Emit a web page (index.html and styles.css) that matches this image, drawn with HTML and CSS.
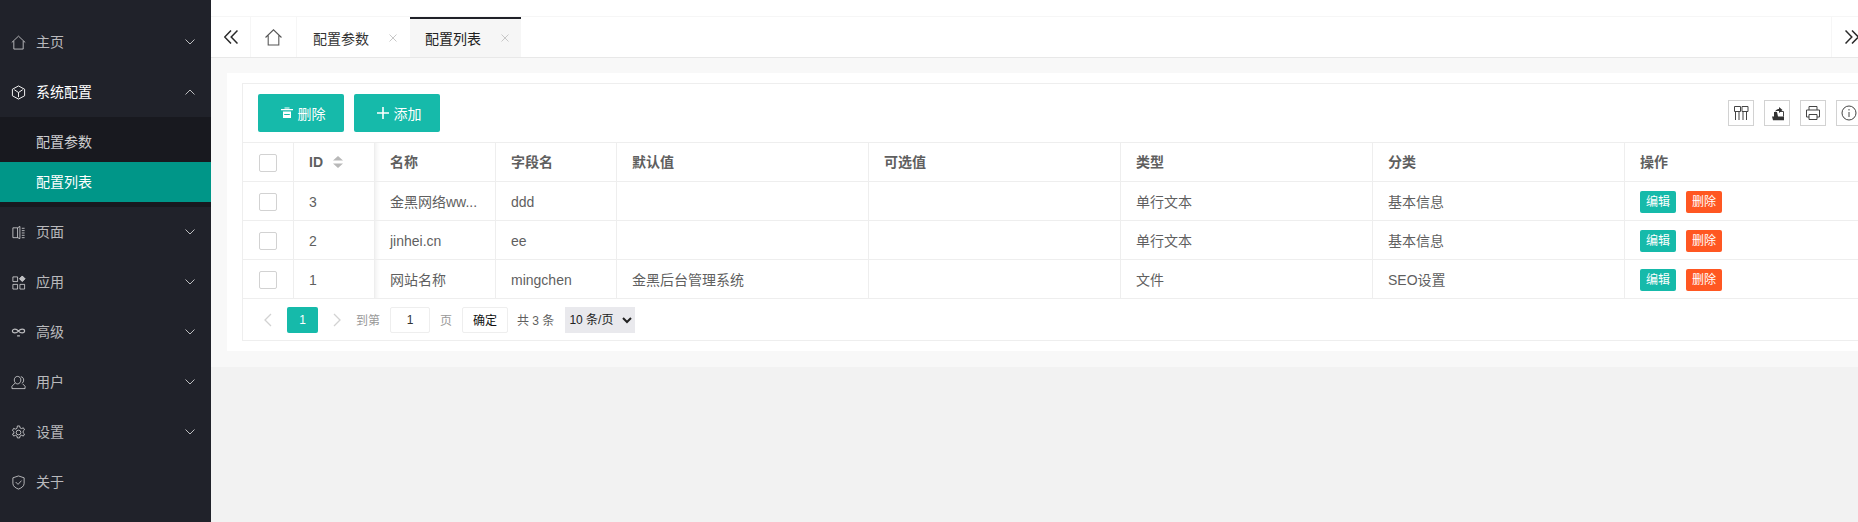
FILE: index.html
```html
<!DOCTYPE html>
<html lang="zh">
<head>
<meta charset="utf-8">
<title>配置列表</title>
<link rel="stylesheet" href="styles.css">
</head>
<body>
<div class="app">
  <aside class="side">
    <a class="nav-item"><svg class="nav-ico" viewBox="0 0 16 16"><path d="M.8 8 8 1.2 15.200 8M3 6.500V15h10V6.500"/></svg><span class="nav-label">主页</span><svg class="chev" viewBox="0 0 10 6"><path d="M.5.5 5 5 9.500.5"/></svg></a>
    <a class="nav-item nav-open"><svg class="nav-ico" viewBox="0 0 16 16"><path d="M8 1 14.500 4.500v7L8 15 1.500 11.500v-7zM3.500 5 8 8l4.500-3M8 8v5"/></svg><span class="nav-label">系统配置</span><svg class="chev" viewBox="0 0 10 6"><path d="M.5 5.500 5 1l4.500 4.500"/></svg></a>
    <div class="sub">
      <a class="sub-item">配置参数</a>
      <a class="sub-item sub-on">配置列表</a>
    </div>
    <a class="nav-item"><svg class="nav-ico" viewBox="0 0 16 16"><path d="M7 3H2v10.500h5zM7 3l2.500-1.500v13L7 13.500M11.500 3.500h3M11.500 6h3M11.500 8.500h3M11.500 11h3M11.500 13.500h3"/></svg><span class="nav-label">页面</span><svg class="chev" viewBox="0 0 10 6"><path d="M.5.500 5 5 9.500.5"/></svg></a>
    <a class="nav-item"><svg class="nav-ico" viewBox="0 0 16 16"><path d="M2 2h5v5H2zM2 10h5v5H2zM9.500 10h5v5h-5z"/><path class="ico-fill" d="m12 1 3 3-3 3-3-3z"/></svg><span class="nav-label">应用</span><svg class="chev" viewBox="0 0 10 6"><path d="M.5.500 5 5 9.500.5"/></svg></a>
    <a class="nav-item"><svg class="nav-ico nav-ico-b" viewBox="0 0 16 16"><path d="M8 6.500C6.500 4.800 5.500 4.500 4.200 4.500S1.500 5.400 1.500 6.500 2.800 8.500 4.200 8.500 6.500 8.200 8 6.500s2.500-2 3.800-2 2.700.9 2.700 2-1.300 2-2.700 2S9.500 8.200 8 6.500zM6.500 11.500h3"/></svg><span class="nav-label">高级</span><svg class="chev" viewBox="0 0 10 6"><path d="M.5.500 5 5 9.500.5"/></svg></a>
    <a class="nav-item"><svg class="nav-ico" viewBox="0 0 16 16"><path d="M7 9.500c-2 0-3.500-2-3.500-4.200S5 1.500 7 1.500s3.500 1.600 3.500 3.800S9 9.500 7 9.500zM4.500 8.500 1 12v2.500h14V12l-2.500-2.500M10.500 1.800c2 .3 3 1.700 3 3.500 0 1.500-.7 3-2 3.700"/></svg><span class="nav-label">用户</span><svg class="chev" viewBox="0 0 10 6"><path d="M.5.500 5 5 9.500.5"/></svg></a>
    <a class="nav-item"><svg class="nav-ico" viewBox="0 0 16 16"><circle cx="8" cy="8" r="2.500"/><path d="M6.800 1h2.400l.4 2 1.600.8 2-.8 1.200 2.200-1.500 1.300v1.800l1.500 1.300-1.200 2.200-2-.8-1.600.8-.4 2H6.800l-.4-2-1.600-.8-2 .8-1.200-2.200L3.100 8.900V7.100L1.600 5.800l1.200-2.200 2 .8 1.600-.8z"/></svg><span class="nav-label">设置</span><svg class="chev" viewBox="0 0 10 6"><path d="M.5.500 5 5 9.500.5"/></svg></a>
    <a class="nav-item"><svg class="nav-ico" viewBox="0 0 16 16"><path d="M8 1 14 3v6c0 3-3 5-6 6-3-1-6-3-6-6V3zM5 7.500 7.500 10 11.200 6"/></svg><span class="nav-label">关于</span></a>
  </aside>

  <main class="main">
    <div class="top-strip"></div>
    <div class="tabs">
      <div class="tab-arrow tab-arrow-l"><svg class="arrows" viewBox="0 0 14 14"><path d="M7 .5.700 7 7 13.500M13.500.5 7.200 7l6.300 6.500"/></svg></div>
      <div class="tab-home"><svg class="home" viewBox="0 0 16 16"><path d="M.5 8 8 .8 15.500 8M3 6V15h10V6"/></svg></div>
      <div class="tab"><span>配置参数</span><svg class="tab-x" viewBox="0 0 8 8"><path d="m.5.500 7 7M7.500.5l-7 7"/></svg></div>
      <div class="tab tab-on"><span>配置列表</span><svg class="tab-x" viewBox="0 0 8 8"><path d="m.5.500 7 7M7.500.5l-7 7"/></svg></div>
      <div class="tab-fill"></div>
      <div class="tab-arrow tab-arrow-r"><svg class="arrows" viewBox="0 0 14 14"><path d="M.5.5 6.800 7 .5 13.500M7 .5 13.300 7 7 13.500"/></svg></div>
    </div>

    <section class="content">
      <div class="card">
        <div class="tbl-box">
          <div class="toolbar">
            <button class="btn"><svg class="btn-ico-s" viewBox="0 0 12 12"><path d="M3.500.500h5v1h-5zM0 2h12v1.300H0z"/><path fill-rule="evenodd" d="M2 4.500h8V11H2zM3.200 7h5.600v1H3.200z"/></svg>删除</button>
            <button class="btn"><svg class="btn-ico" viewBox="0 0 12 12"><path d="M5.200 0h1.600v5.200H12v1.600H6.800V12H5.200V6.800H0V5.200h5.200z"/></svg>添加</button>
            <div class="tools">
              <span class="tool"><svg viewBox="0 0 16 16"><path d="M1.500 1.500h6v5h-6zM9 1.500h6v5H9zM2.500 6.500V15M6 6.500V15M10 6.500V15M13.500 6.500V15"/></svg></span>
              <span class="tool"><svg viewBox="0 0 16 16"><path d="M10 6.500h4.500v5"/><path class="solid" d="M3 11.500h12v3.800H4zM5 7h3l1 4.500H5zM6 6.500C7 4.500 9 4 10 4V2l3.500 3L10 8V6C8.500 6 7 6 6 6.500z"/></svg></span>
              <span class="tool"><svg viewBox="0 0 16 16"><path d="M4 5V1.500h8V5M4 12H1.500V5h13v7H12M4 9.500h8v5H4z"/></svg></span>
              <span class="tool"><svg viewBox="0 0 16 16"><circle cx="8" cy="8" r="7"/><path d="M8 7v5M8 4v1.500"/></svg></span>
            </div>
          </div>
          <table class="grid">
            <colgroup>
              <col class="c-check"><col class="c-id"><col class="c-name"><col class="c-field"><col class="c-wide"><col class="c-wide"><col class="c-wide"><col class="c-wide"><col class="c-act">
            </colgroup>
            <thead>
              <tr>
                <th class="td-check"><span class="check"></span></th>
                <th>ID<svg class="sort" viewBox="0 0 10 12"><path d="M5 0l5 4.500H0zM0 7.500h10L5 12z"/></svg></th>
                <th class="fixed-edge">名称</th><th>字段名</th><th>默认值</th><th>可选值</th><th>类型</th><th>分类</th><th>操作</th>
              </tr>
            </thead>
            <tbody>
              <tr>
                <td class="td-check"><span class="check"></span></td><td>3</td><td class="fixed-edge">金黑网络ww...</td><td>ddd</td><td></td><td></td><td>单行文本</td><td>基本信息</td>
                <td><span class="act-row"><a class="mini">编辑</a><a class="mini mini-del">删除</a></span></td>
              </tr>
              <tr>
                <td class="td-check"><span class="check"></span></td><td>2</td><td class="fixed-edge">jinhei.cn</td><td>ee</td><td></td><td></td><td>单行文本</td><td>基本信息</td>
                <td><span class="act-row"><a class="mini">编辑</a><a class="mini mini-del">删除</a></span></td>
              </tr>
              <tr>
                <td class="td-check"><span class="check"></span></td><td>1</td><td class="fixed-edge">网站名称</td><td>mingchen</td><td>金黑后台管理系统</td><td></td><td>文件</td><td>SEO设置</td>
                <td><span class="act-row"><a class="mini">编辑</a><a class="mini mini-del">删除</a></span></td>
              </tr>
            </tbody>
          </table>
          <div class="pager">
            <svg class="pg-arrow" viewBox="0 0 8 14"><path d="M7 1 1 7l6 6"/></svg>
            <span class="pg-cur">1</span>
            <svg class="pg-arrow pg-next" viewBox="0 0 8 14"><path d="m1 1 6 6-6 6"/></svg>
            <span class="pg-muted">到第</span>
            <input class="pg-input" value="1">
            <span class="pg-muted">页</span>
            <button class="pg-ok">确定</button>
            <span class="pg-total">共 3 条</span>
            <select class="pg-size"><option>10 条/页</option></select>
          </div>
        </div>
      </div>
    </section>
  </main>
</div>
</body>
</html>
```

FILE: styles.css
```css
* { box-sizing: border-box; }
html, body { margin: 0; height: 522px; overflow: hidden; background: #f2f2f2; }
body { font-family: "Liberation Sans", "Noto Sans CJK SC", sans-serif; font-size: 14px; color: #5f5f5f; }
.app { display: flex; width: 1871px; height: 522px; }

.side { flex: 0 0 211px; height: 522px; padding-top: 17px; background: #20222a; }
.nav-item { display: flex; align-items: center; height: 50px; padding-left: 11px; color: rgba(255,255,255,.7); }
.nav-open { color: #fff; }
.nav-ico { flex: none; width: 15px; height: 15px; fill: none; stroke: rgba(255,255,255,.7); stroke-width: 1; }
.nav-ico-b { stroke-width: 1.300; }
.nav-open .nav-ico { stroke: #fff; }
.ico-fill { fill: rgba(255,255,255,.7); }
.nav-label { margin: 0 0 2px 10px; flex: 1; }
.chev { flex: none; width: 10px; height: 6px; margin-right: 16px; fill: none; stroke: rgba(255,255,255,.7); stroke-width: 1; }
.sub { padding: 5px 0; background: #18191f; }
.sub-item { display: block; height: 40px; line-height: 40px; padding-left: 36px; color: rgba(255,255,255,.8); }
.sub-on { background: #009688; color: #fff; }

.main { flex: 1; min-width: 0; background: #f2f2f2; }
.top-strip { height: 17px; background: #fff; border-bottom: 1px solid #f6f6f6; }
.tabs { display: flex; height: 41px; background: #fff; border-bottom: 1px solid #e8e8e8; }
.tab-arrow { display: flex; align-items: center; justify-content: center; width: 40px; }
.tab-arrow-l { border-right: 1px solid #f6f6f6; }
.tab-arrow-r { border-left: 1px solid #f6f6f6; }
.arrows { width: 14px; height: 14px; fill: none; stroke: #2a2a2a; stroke-width: 1.500; }
.tab-home { display: flex; align-items: center; justify-content: center; width: 46px; border-right: 1px solid #f6f6f6; }
.home { width: 17px; height: 17px; fill: none; stroke: #555; stroke-width: 1; }
.tab { display: flex; align-items: center; width: 113px; padding-left: 16px; color: #333; border-top: 2px solid transparent; }
.tab-on { width: 111px; padding-left: 15px; background: #f6f6f6; border-top-color: #1f2128; color: #222; }
.tab-x { width: 8px; height: 8px; margin-left: 20px; fill: none; stroke: #c8c8c8; stroke-width: 1; }
.tab-fill { flex: 1; }

.content { height: 309px; padding: 15px 0 16px 16px; background: #f8f8f8; }
.card { height: 100%; padding: 10px 0 10px 15px; background: #fff; }
.tbl-box { height: 100%; border: 1px solid #eee; background: #fff; }

.toolbar { display: flex; align-items: center; height: 59px; padding: 0 8px 0 15px; gap: 10px; border-bottom: 1px solid #eee; }
.btn { display: flex; align-items: center; justify-content: center; gap: 5px; width: 86px; height: 38px; padding: 0 0 0 4px; border: 0; border-radius: 2px; background: #16baaa; color: #fff; font: inherit; }
.btn-ico-s { width: 12px; height: 12px; fill: #fff; }
.btn-ico { width: 12px; height: 12px; fill: #fff; }
.tools { display: flex; gap: 10px; margin-left: auto; }
.tool { display: flex; align-items: center; justify-content: center; width: 26px; height: 26px; border: 1px solid #d2d2d2; }
.tool svg { width: 16px; height: 16px; fill: none; stroke: #444; stroke-width: 1; }
.tool .solid { fill: #333; stroke: none; }

.grid { border-collapse: separate; border-spacing: 0; table-layout: fixed; width: 1627px; }
.c-check { width: 51px; } .c-id { width: 81px; } .c-name { width: 121px; } .c-field { width: 121px; }
.c-wide { width: 252px; } .c-act { width: 245px; }
.grid th, .grid td { height: 39px; padding: 0 15px; line-height: 20px; border-right: 1px solid #eee; border-bottom: 1px solid #eee; text-align: left; white-space: nowrap; font-weight: 400; }
.grid td { padding-top: 2px; }
.grid th { font-weight: 700; }
.grid th:last-child, .grid td:last-child { border-right: 0; }
.grid .td-check { padding: 0 0 0 16px; }
.fixed-edge { box-shadow: inset 6px 0 5px -5px rgba(0,0,0,.08); }
.check { display: block; width: 18px; height: 18px; margin-top: 2px; border: 1px solid #d2d2d2; border-radius: 2px; background: #fff; }
.sort { display: inline-block; width: 10px; height: 12px; margin-left: 10px; vertical-align: -1px; fill: #b8b8b8; }
.act-row { display: flex; gap: 10px; }
.mini { display: block; width: 36px; height: 22px; line-height: 22px; text-align: center; border-radius: 2px; background: #16baaa; color: #fff; font-size: 12px; }
.mini-del { background: #ff5722; }

.pager { display: flex; align-items: center; height: 41px; padding: 0 0 0 21px; font-size: 12px; }
.pg-arrow { flex: none; width: 8px; height: 14px; fill: none; stroke: #d2d2d2; stroke-width: 1.300; }
.pg-cur { width: 31px; height: 26px; line-height: 26px; margin-left: 15px; text-align: center; border-radius: 2px; background: #16baaa; color: #fff; }
.pg-next { margin: 0 15px; }
.pg-muted { color: #999; }
.pg-input { width: 40px; height: 26px; margin: 0 10px; padding: 0; border: 1px solid #eee; border-radius: 2px; text-align: center; color: #333; font: inherit; outline: 0; }
.pg-ok { width: 46px; height: 26px; margin-left: 10px; padding: 0; border: 1px solid #eee; border-radius: 2px; background: #fff; color: #111; font: inherit; }
.pg-total { margin-left: 9px; color: #5f5f5f; }
.pg-size { width: 70px; height: 26px; margin-left: 11px; padding: 0; border: 0; border-radius: 0; background: #e9e9ed; color: #222; font: inherit; }
```
